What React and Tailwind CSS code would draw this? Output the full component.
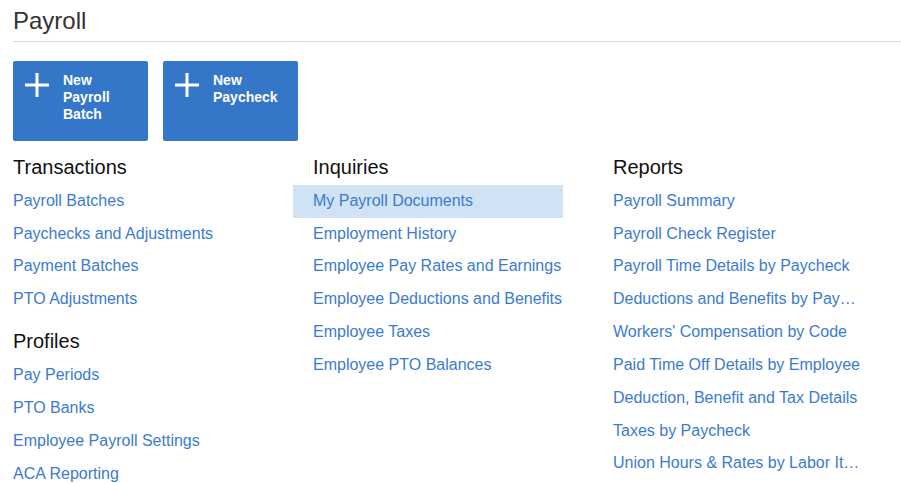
import React from "react";

const Plus = () => (
  <svg width="26" height="26" viewBox="0 0 26 26" className="shrink-0">
    <path d="M13 1v24M1 13h24" stroke="#fff" strokeWidth="3" />
  </svg>
);

const columns = [
  [
    { title: "Transactions", links: ["Payroll Batches", "Paychecks and Adjustments", "Payment Batches", "PTO Adjustments"] },
    { title: "Profiles", links: ["Pay Periods", "PTO Banks", "Employee Payroll Settings", "ACA Reporting"] },
  ],
  [
    {
      title: "Inquiries",
      links: [
        "My Payroll Documents",
        "Employment History",
        "Employee Pay Rates and Earnings",
        "Employee Deductions and Benefits",
        "Employee Taxes",
        "Employee PTO Balances",
      ],
    },
  ],
  [
    {
      title: "Reports",
      links: [
        "Payroll Summary",
        "Payroll Check Register",
        "Payroll Time Details by Paycheck",
        "Deductions and Benefits by Paycheck",
        "Workers' Compensation by Code",
        "Paid Time Off Details by Employee",
        "Deduction, Benefit and Tax Details",
        "Taxes by Paycheck",
        "Union Hours & Rates by Labor Item",
      ],
    },
  ],
];

export default function App() {
  return (
    <div className="min-h-[483px] w-[901px] overflow-hidden bg-white pl-[13px] font-['Liberation_Sans',Arial,sans-serif]">
      <div className="border-b border-[#d9d9d9] pt-[7px] pb-[6px] text-[24px] leading-[28px] text-[#333]">Payroll</div>
      <div className="mt-[19px] flex gap-[15px]">
        {[["New", "Payroll", "Batch"], ["New", "Paycheck"]].map((lines, i) => (
          <div key={i} className="flex h-[80px] w-[135px] gap-[13px] rounded-[2px] bg-[#3477c9] pt-[11px] pl-[11px]">
            <Plus />
            <div className="text-[14px] leading-[17px] font-bold text-white">
              {lines.map((l) => (
                <div key={l}>{l}</div>
              ))}
            </div>
          </div>
        ))}
      </div>
      <div className="mt-[10px] grid grid-cols-[300px_300px_288px]">
        {columns.map((sections, ci) => (
          <div key={ci} className="flex flex-col gap-[9.3px]">
            {sections.map((s) => (
              <div key={s.title}>
                <div className="h-[33.7px] text-[20px] leading-[33px] text-[#111]">{s.title}</div>
                {s.links.map((l) => (
                  <div
                    key={l}
                    className={
                      "-ml-5 h-[32.85px] w-[270px] truncate pl-5 text-[16px] leading-[32.85px] text-[#3b7bcf] " +
                      (l === "My Payroll Documents" ? "bg-[#d0e3f4]" : "")
                    }
                  >
                    {l}
                  </div>
                ))}
              </div>
            ))}
          </div>
        ))}
      </div>
    </div>
  );
}
